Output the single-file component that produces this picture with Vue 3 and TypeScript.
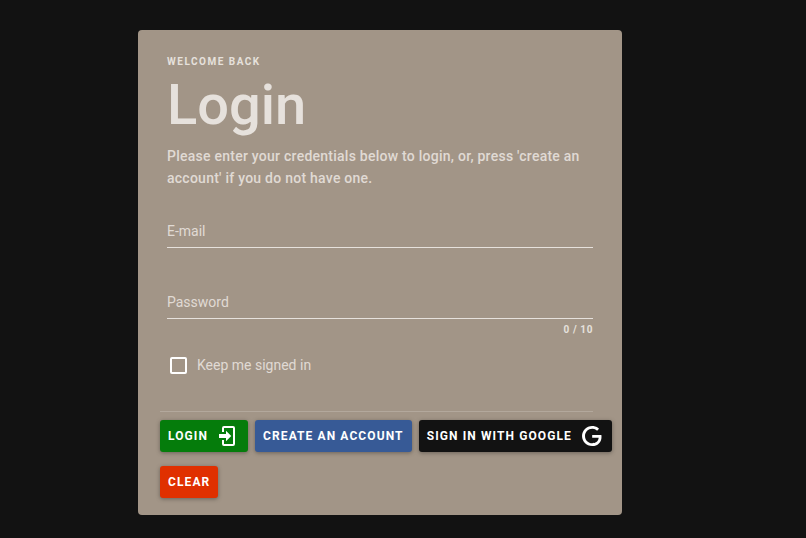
<script setup lang="ts">
const title = "Login";
</script>

<template>
  <main class="page">
    <section class="card">
      <header class="head">
        <div class="eyebrow">WELCOME BACK</div>
        <h1 class="title">{{ title }}</h1>
        <p class="lead">Please enter your credentials below to login, or, press 'create an account' if you do not have one.</p>
      </header>
      <form class="form" @submit.prevent>
        <label class="field">
          <input class="input" type="text" placeholder="E-mail" />
        </label>
        <label class="field field-pass">
          <input class="input" type="password" placeholder="Password" />
        </label>
        <div class="counter">0 / 10</div>
        <label class="check">
          <span class="box"></span>
          <span>Keep me signed in</span>
        </label>
      </form>
      <div class="divider"></div>
      <div class="actions">
        <button class="btn green" type="button">
          LOGIN
          <svg class="icon" viewBox="0 0 24 24" width="24" height="24">
            <path fill="currentColor" d="M10 17.25V14H3v-4h7V6.75L15.25 12 10 17.25M8 2h9a2 2 0 0 1 2 2v16a2 2 0 0 1-2 2H8a2 2 0 0 1-2-2v-4h2v4h9V4H8v4H6V4a2 2 0 0 1 2-2z" />
          </svg>
        </button>
        <button class="btn blue" type="button">CREATE AN ACCOUNT</button>
        <button class="btn black" type="button">
          SIGN IN WITH GOOGLE
          <svg class="icon" viewBox="0 0 24 24" width="24" height="24">
            <path fill="currentColor" d="M21.35 11.1h-9.17v2.73h6.51c-.33 3.81-3.5 5.44-6.5 5.44C8.36 19.27 5 16.25 5 12c0-4.1 3.2-7.27 7.2-7.27 3.09 0 4.9 1.97 4.9 1.97L19 4.72S16.56 2 12.1 2C6.42 2 2.03 6.8 2.03 12c0 5.05 4.13 10 10.22 10 5.35 0 9.25-3.67 9.25-9.09 0-1.15-.15-1.81-.15-1.81z" />
          </svg>
        </button>
        <button class="btn red" type="button">CLEAR</button>
      </div>
    </section>
  </main>
</template>

<style>
html,
body {
  margin: 0;
  background: #121212;
}
</style>

<style scoped>
.page {
  min-height: 538px;
  box-sizing: border-box;
  padding: 30px 0 0 138px;
  background: #121212;
  font-family: Roboto, "Liberation Sans", sans-serif;
}

.card {
  width: 484px;
  height: 485px;
  box-sizing: border-box;
  background: #a29587;
  border-radius: 4px;
  color: #e6e1dc;
}

.head {
  padding: 26px 29px 0;
}

.eyebrow {
  font-size: 10px;
  font-weight: 700;
  line-height: 12px;
  letter-spacing: 1.5px;
  color: #e6e1dc;
}

.title {
  margin: 5px 0 0;
  font-size: 56px;
  font-weight: 500;
  line-height: 64px;
  color: #e6e1dc;
}

.lead {
  margin: 8px 0 0;
  font-size: 14px;
  font-weight: 500;
  line-height: 22px;
  letter-spacing: 0.25px;
  color: #e0dad4;
}

.form {
  padding: 0 29px;
}

.field {
  display: block;
  margin-top: 25px;
  border-bottom: 1px solid #e6e1dc;
}

.field-pass {
  margin-top: 37px;
}

.input {
  display: block;
  width: 100%;
  height: 33px;
  padding: 0;
  border: 0;
  outline: 0;
  background: transparent;
  font: 400 14px/20px Roboto, "Liberation Sans", sans-serif;
  color: #e6e1dc;
}

.input::placeholder {
  color: #e0dad4;
  opacity: 1;
}

.counter {
  margin-top: 5px;
  font-size: 10px;
  font-weight: 700;
  line-height: 12px;
  letter-spacing: 0.6px;
  text-align: right;
}

.check {
  display: flex;
  align-items: center;
  gap: 10px;
  margin: 19px 0 0 3px;
  font-size: 14px;
  line-height: 20px;
  color: #e0dad4;
}

.box {
  width: 13px;
  height: 13px;
  border: 2px solid #fff;
  border-radius: 2px;
}

.divider {
  height: 1px;
  margin: 36px 29px 0 22px;
  background: #b3a89c;
}

.actions {
  display: flex;
  flex-wrap: wrap;
  gap: 14px 7px;
  padding: 8px 0 0 22px;
}

.btn {
  display: inline-flex;
  align-items: center;
  height: 32px;
  padding: 0 8px;
  border: 0;
  border-radius: 3px;
  color: #fff;
  font: 700 12px/16px Roboto, "Liberation Sans", sans-serif;
  letter-spacing: 1.1px;
  box-shadow: 0 1px 4px rgba(0, 0, 0, 0.35);
}

.icon {
  margin-left: 8px;
}

.green {
  background: #057c0b;
}

.blue {
  background: #375a96;
}

.black {
  background: #121212;
}

.red {
  background: #e03000;
}
</style>
